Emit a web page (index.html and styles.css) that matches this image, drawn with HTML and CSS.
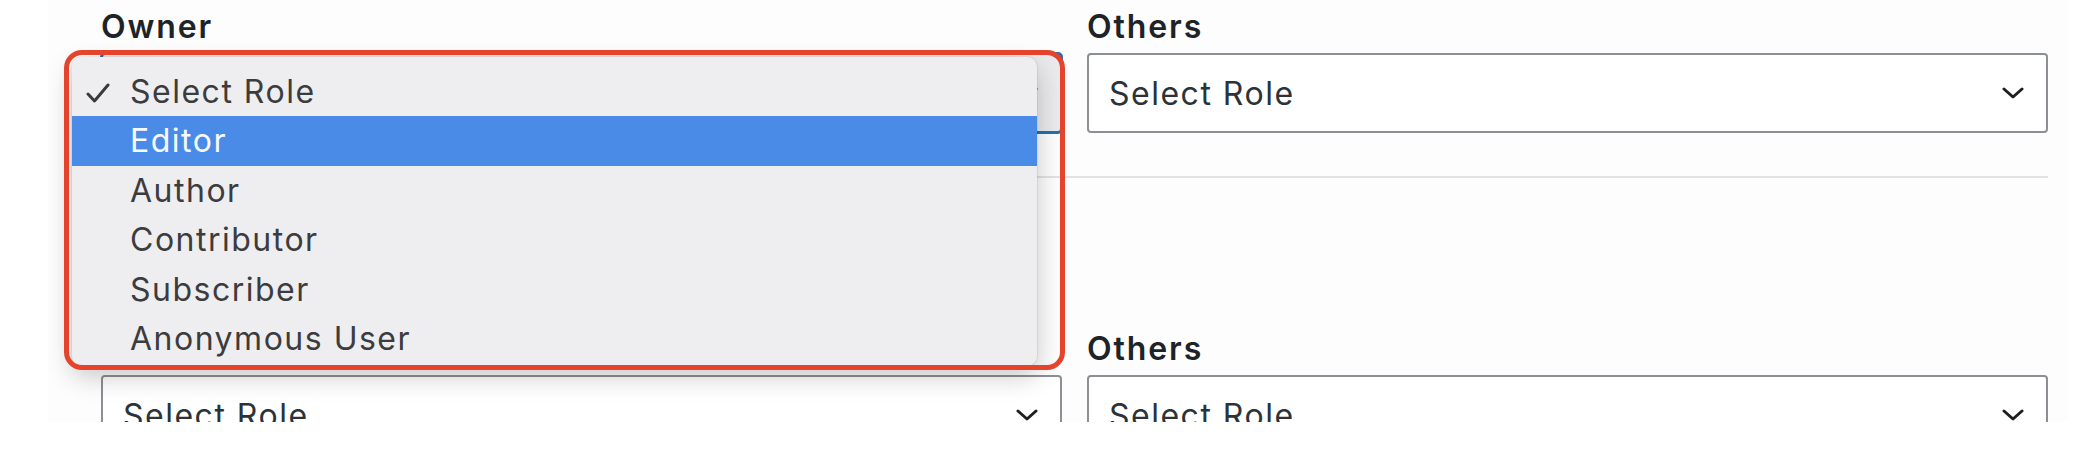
FILE: index.html
```html
<!DOCTYPE html>
<html lang="en">
<head>
<meta charset="utf-8">
<title>Role select</title>
<link rel="stylesheet" href="styles.css">
</head>
<body>
<div class="shot">
  <div class="row">
    <div class="field owner">
      <div class="label">Owner</div>
      <div class="select focused">
        <span>Select Role</span>
        <svg class="chev" width="22" height="12" viewBox="0 0 22 12"><path d="M2 2 L11 10 L20 2" fill="none" stroke="#1e1e1e" stroke-width="3" stroke-linecap="round" stroke-linejoin="round"/></svg>
      </div>
      <div class="menu">
        <div class="opt checked">
          <svg class="check" width="24" height="20" viewBox="0 0 24 20"><path d="M2 11 L8.5 18 L22 2" fill="none" stroke="#3a3a3c" stroke-width="3" stroke-linecap="round" stroke-linejoin="round"/></svg>
          Select Role
        </div>
        <div class="opt active">Editor</div>
        <div class="opt">Author</div>
        <div class="opt">Contributor</div>
        <div class="opt">Subscriber</div>
        <div class="opt">Anonymous User</div>
      </div>
      <div class="annot"></div>
    </div>
    <div class="field">
      <div class="label">Others</div>
      <div class="select">
        <span>Select Role</span>
        <svg class="chev" width="22" height="12" viewBox="0 0 22 12"><path d="M2 2 L11 10 L20 2" fill="none" stroke="#1e1e1e" stroke-width="3" stroke-linecap="round" stroke-linejoin="round"/></svg>
      </div>
    </div>
  </div>
  <div class="divider"></div>
  <div class="row second">
    <div class="field">
      <div class="label">Owner</div>
      <div class="select">
        <span>Select Role</span>
        <svg class="chev" width="22" height="12" viewBox="0 0 22 12"><path d="M2 2 L11 10 L20 2" fill="none" stroke="#1e1e1e" stroke-width="3" stroke-linecap="round" stroke-linejoin="round"/></svg>
      </div>
    </div>
    <div class="field">
      <div class="label">Others</div>
      <div class="select">
        <span>Select Role</span>
        <svg class="chev" width="22" height="12" viewBox="0 0 22 12"><path d="M2 2 L11 10 L20 2" fill="none" stroke="#1e1e1e" stroke-width="3" stroke-linecap="round" stroke-linejoin="round"/></svg>
      </div>
    </div>
  </div>
</div>
</body>
</html>
```

FILE: styles.css
```css
* { box-sizing: border-box; }
html, body { margin: 0; padding: 0; background: #ffffff; }
body { font-family: Inter, "Liberation Sans", sans-serif; }

.shot {
  margin-left: 48px;
  width: 2020px;
  height: 422px;
  overflow: hidden;
  background: #fdfdfd;
  padding: 7px 0 0 53px;
}

.row {
  display: grid;
  grid-template-columns: 961px 961px;
  column-gap: 25px;
}
.row.second { margin-top: 151px; }

.field { position: relative; }

.label {
  font-size: 32px;
  font-weight: 600;
  line-height: 40px;
  height: 40px;
  color: #1d2327;
  letter-spacing: 1.9px;
}

.select {
  margin-top: 6px;
  height: 80px;
  border: 2px solid #8c8f94;
  border-radius: 4px;
  background: #ffffff;
  padding: 0 22px 0 20px;
  display: flex;
  align-items: center;
  justify-content: space-between;
  font-size: 32px;
  color: #2c3338;
  letter-spacing: 1.5px;
}
.select.focused {
  border-color: #2271b1;
  box-shadow: 0 0 0 1px #2271b1;
  background: #eaeaec;
}

.divider {
  margin-top: 43px;
  width: 1947px;
  height: 2px;
  background: #e2e2e4;
}

.menu {
  position: absolute;
  left: -29px;
  top: 50px;
  width: 965px;
  height: 309px;
  padding-top: 10px;
  background: #eeeef0;
  border-radius: 10px;
  box-shadow: 0 10px 26px rgba(0,0,0,0.22), 0 0 0 1px rgba(0,0,0,0.06);
  z-index: 2;
}
.opt {
  position: relative;
  height: 49.4px;
  line-height: 49.4px;
  padding-left: 58px;
  font-size: 32px;
  color: #3c3c3e;
  letter-spacing: 1.5px;
}
.opt.active {
  background: #4a8be8;
  color: #f6f9ff;
}
.check {
  position: absolute;
  left: 14px;
  top: 16px;
}

.annot {
  position: absolute;
  left: -37px;
  top: 43px;
  width: 1001px;
  height: 320px;
  border: 5px solid #e6432c;
  border-radius: 18px;
  z-index: 3;
}
```
